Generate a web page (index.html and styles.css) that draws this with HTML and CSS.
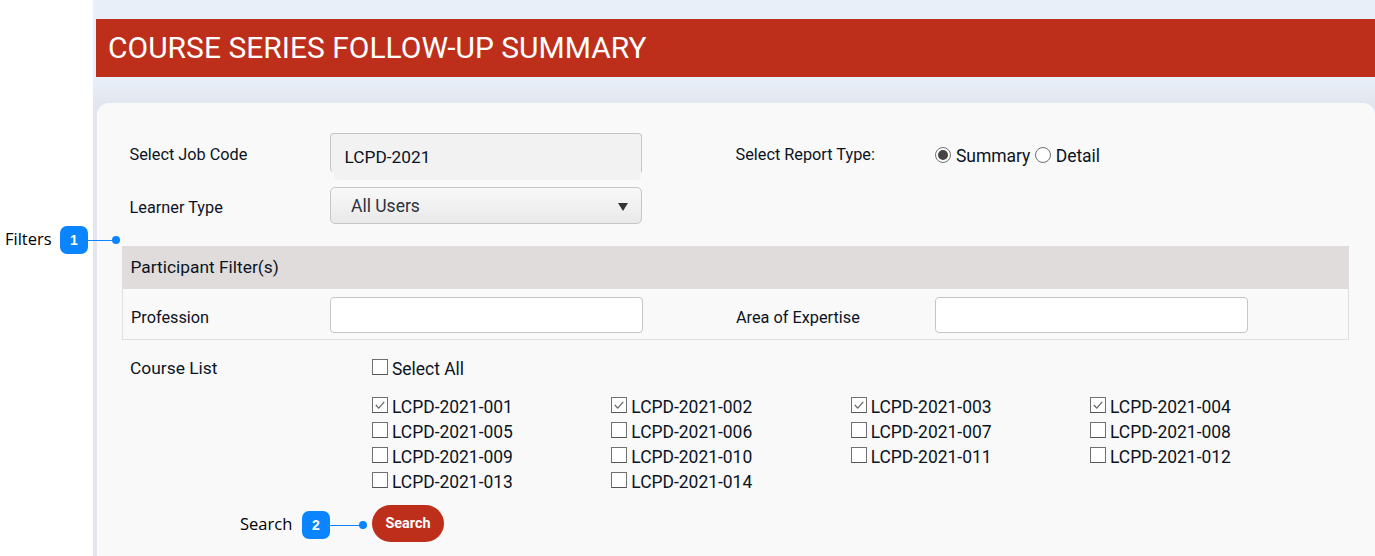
FILE: index.html
```html
<!DOCTYPE html>
<html lang="en">
<head>
<meta charset="utf-8">
<title>Course Series Follow-up Summary</title>
<link rel="stylesheet" href="styles.css">
</head>
<body>
<div class="page">
  <div class="gutter"></div>
  <main class="main">
    <h1 class="title">COURSE SERIES FOLLOW-UP SUMMARY</h1>
    <section class="card">
      <div class="row row-job">
        <span class="label">Select Job Code</span>
        <div class="readonly">LCPD-2021</div>
        <span class="label label-right">Select Report Type:</span>
        <div class="radios">
          <span class="radio radio-on"></span><span class="radio-text">Summary</span>
          <span class="radio"></span><span class="radio-text">Detail</span>
        </div>
      </div>
      <div class="row row-learner">
        <span class="label">Learner Type</span>
        <div class="select"><span>All Users</span><span class="caret"></span></div>
      </div>
      <div class="filters">
        <div class="filters-head">Participant Filter(s)</div>
        <div class="filters-body">
          <span class="label filter-label">Profession</span>
          <div class="input"></div>
          <span class="label label-area">Area of Expertise</span>
          <div class="input"></div>
        </div>
      </div>
      <div class="courses">
        <span class="label course-label">Course List</span>
        <div class="course-col">
          <label class="check select-all"><span class="box"></span>Select All</label>
          <div class="course-grid">
            <label class="check"><span class="box"><svg viewBox="0 0 15 15"><path d="M3 7.5l3.2 3.3L12 4.2" /></svg></span>LCPD-2021-001</label>
            <label class="check"><span class="box"><svg viewBox="0 0 15 15"><path d="M3 7.5l3.2 3.3L12 4.2" /></svg></span>LCPD-2021-002</label>
            <label class="check"><span class="box"><svg viewBox="0 0 15 15"><path d="M3 7.5l3.2 3.3L12 4.2" /></svg></span>LCPD-2021-003</label>
            <label class="check"><span class="box"><svg viewBox="0 0 15 15"><path d="M3 7.5l3.2 3.3L12 4.2" /></svg></span>LCPD-2021-004</label>
            <label class="check"><span class="box"></span>LCPD-2021-005</label>
            <label class="check"><span class="box"></span>LCPD-2021-006</label>
            <label class="check"><span class="box"></span>LCPD-2021-007</label>
            <label class="check"><span class="box"></span>LCPD-2021-008</label>
            <label class="check"><span class="box"></span>LCPD-2021-009</label>
            <label class="check"><span class="box"></span>LCPD-2021-010</label>
            <label class="check"><span class="box"></span>LCPD-2021-011</label>
            <label class="check"><span class="box"></span>LCPD-2021-012</label>
            <label class="check"><span class="box"></span>LCPD-2021-013</label>
            <label class="check"><span class="box"></span>LCPD-2021-014</label>
          </div>
          <button class="search" type="button">Search</button>
        </div>
      </div>
    </section>
  </main>
</div>
<div class="note note-filters"><span class="note-text">Filters</span><span class="badge">1</span><span class="line line-1"></span><span class="dot"></span></div>
<div class="note note-search"><span class="note-text">Search</span><span class="badge">2</span><span class="line line-2"></span><span class="dot"></span></div>
</body>
</html>
```
FILE: styles.css
```css
* { box-sizing: border-box; }
html, body { margin: 0; padding: 0; height: 556px; overflow: hidden; background: #fff; }
body { font-family: Roboto, "Liberation Sans", sans-serif; color: #0b1424; position: relative; }
.page { display: flex; height: 556px; }
.gutter { width: 93px; flex: none; background: #fff; }
.main {
  flex: 1; min-width: 0; padding: 19px 0 0 3px;
  background: linear-gradient(#e8eff8 0, #e8eff8 80px, #e2e6ef 103px, #e2e6ef 100%);
}
.title {
  margin: 0; height: 58px; padding-left: 12px; background: #bd2f1b; color: #fff;
  font-size: 30px; font-weight: 400; line-height: 57px; white-space: nowrap;
}
.card {
  margin: 26px 0 0 1px; height: 460px; padding: 30px 26px 0 25px;
  background: #f9f9f9; border-radius: 12px 12px 0 0;
}
.row { display: flex; align-items: flex-start; }
.label { font-size: 16.3px; line-height: 20px; }
.row-job { height: 54px; padding-left: 7.5px; }
.row-job > .label:first-child { width: 200.5px; padding-top: 12px; flex: none; }
.readonly {
  position: relative; width: 312px; height: 39px; flex: none; padding: 13px 0 0 13.5px; font-size: 17.3px; line-height: 21px;
  background: #f2f2f2; border: 1px solid #c6c6c6; border-bottom: 0; border-radius: 4px 4px 0 4px;
}
.readonly::after {
  content: ""; position: absolute; left: 3px; right: 0; top: 38px; height: 8px;
  background: #f2f2f2; border-radius: 0 0 4px 4px;
}
.label-right { width: 199.5px; margin-left: 93.5px; flex: none; padding-top: 12px; }
.radios { display: flex; align-items: center; height: 24px; margin-top: 11px; font-size: 17.5px; }
.radio {
  width: 16px; height: 16px; border: 1px solid #707070; border-radius: 50%; background: #fff; flex: none;
  margin-top: -3px; position: relative;
}
.radio-on::after { content: ""; position: absolute; inset: 2px; border-radius: 50%; background: #444; }
.radio-text { margin: 0 4.5px 0 5px; letter-spacing: -.05px; }
.row-learner { height: 59px; padding-left: 7.5px; }
.row-learner .label { width: 200.5px; flex: none; padding-top: 11px; }
.select {
  width: 312px; height: 37px; display: flex; align-items: center; justify-content: space-between;
  padding: 1px 13px 0 20px; font-size: 17.5px; color: #2d3340; border: 1px solid #c6c6c6; border-radius: 5px;
  background: linear-gradient(#f8f8f8, #e9e9e9);
}
.caret { width: 0; height: 0; border: 5.5px solid transparent; border-top: 8px solid #333; border-bottom: 0; margin-top: 1px; }
.filters-head { height: 43px; background: #e0dcdb; padding-left: 8.5px; font-size: 17.35px; line-height: 42px; }
.filters-body {
  height: 51px; display: flex; align-items: flex-start; padding: 8px 0 0 8px;
  border: 1px solid #dfe0e0; border-top: 0;
}
.filter-label { width: 199px; padding-top: 11px; flex: none; }
.label-area { width: 199px; margin-left: 93px; flex: none; padding-top: 11px; }
.input { width: 313px; height: 36px; flex: none; background: #fff; border: 1px solid #c6c6c6; border-radius: 4px; }
.courses { display: flex; padding: 19px 0 0 8px; }
.course-label { width: 242px; flex: none; font-size: 17.4px; line-height: 20px; margin-top: -1px; }
.course-col { flex: 1; min-width: 0; }
.check { display: flex; align-items: center; height: 25px; font-size: 17.45px; white-space: nowrap; color: #0b1424; }
.box {
  width: 16px; height: 16px; margin: -4px 4px 0 0; flex: none; background: #fff;
  border: 1px solid #707070; border-bottom-color: #555; display: block;
}
.box svg { display: block; width: 14px; height: 14px; fill: none; stroke: #666; stroke-width: 1.4; }
.select-all { height: 25px; margin-top: -3px; }
.course-grid { display: grid; grid-template-columns: repeat(4, 239.33px); margin-top: 13px; }
.search {
  display: block; width: 72px; height: 37px; margin-top: 11px; padding: 1px 0 0; border: 0; border-radius: 19px;
  background: #bd2f1b; color: #fff; font: 700 14.4px/36px Roboto, "Liberation Sans", sans-serif;
}
.note { position: absolute; display: flex; align-items: center; height: 28px; }
.note-filters { left: 5px; top: 226px; }
.note-search { left: 240px; top: 511px; }
.note-text { font-family: "Open Sans", "Liberation Sans", sans-serif; font-size: 16.5px; color: #000; margin-top: -4px; }
.note-filters .note-text { width: 55px; }
.note-search .note-text { width: 62px; }
.badge {
  width: 28px; height: 28px; flex: none; border-radius: 7px; background: #0a84ff; color: #fff;
  font: 700 14px/28px "Liberation Sans", sans-serif; text-align: center;
}
.line { height: 1px; flex: none; background: #0a84ff; }
.line-1 { width: 25px; }
.line-2 { width: 30px; }
.dot { width: 8px; height: 8px; flex: none; margin-left: -1px; border-radius: 50%; background: #0a84ff; }
```
